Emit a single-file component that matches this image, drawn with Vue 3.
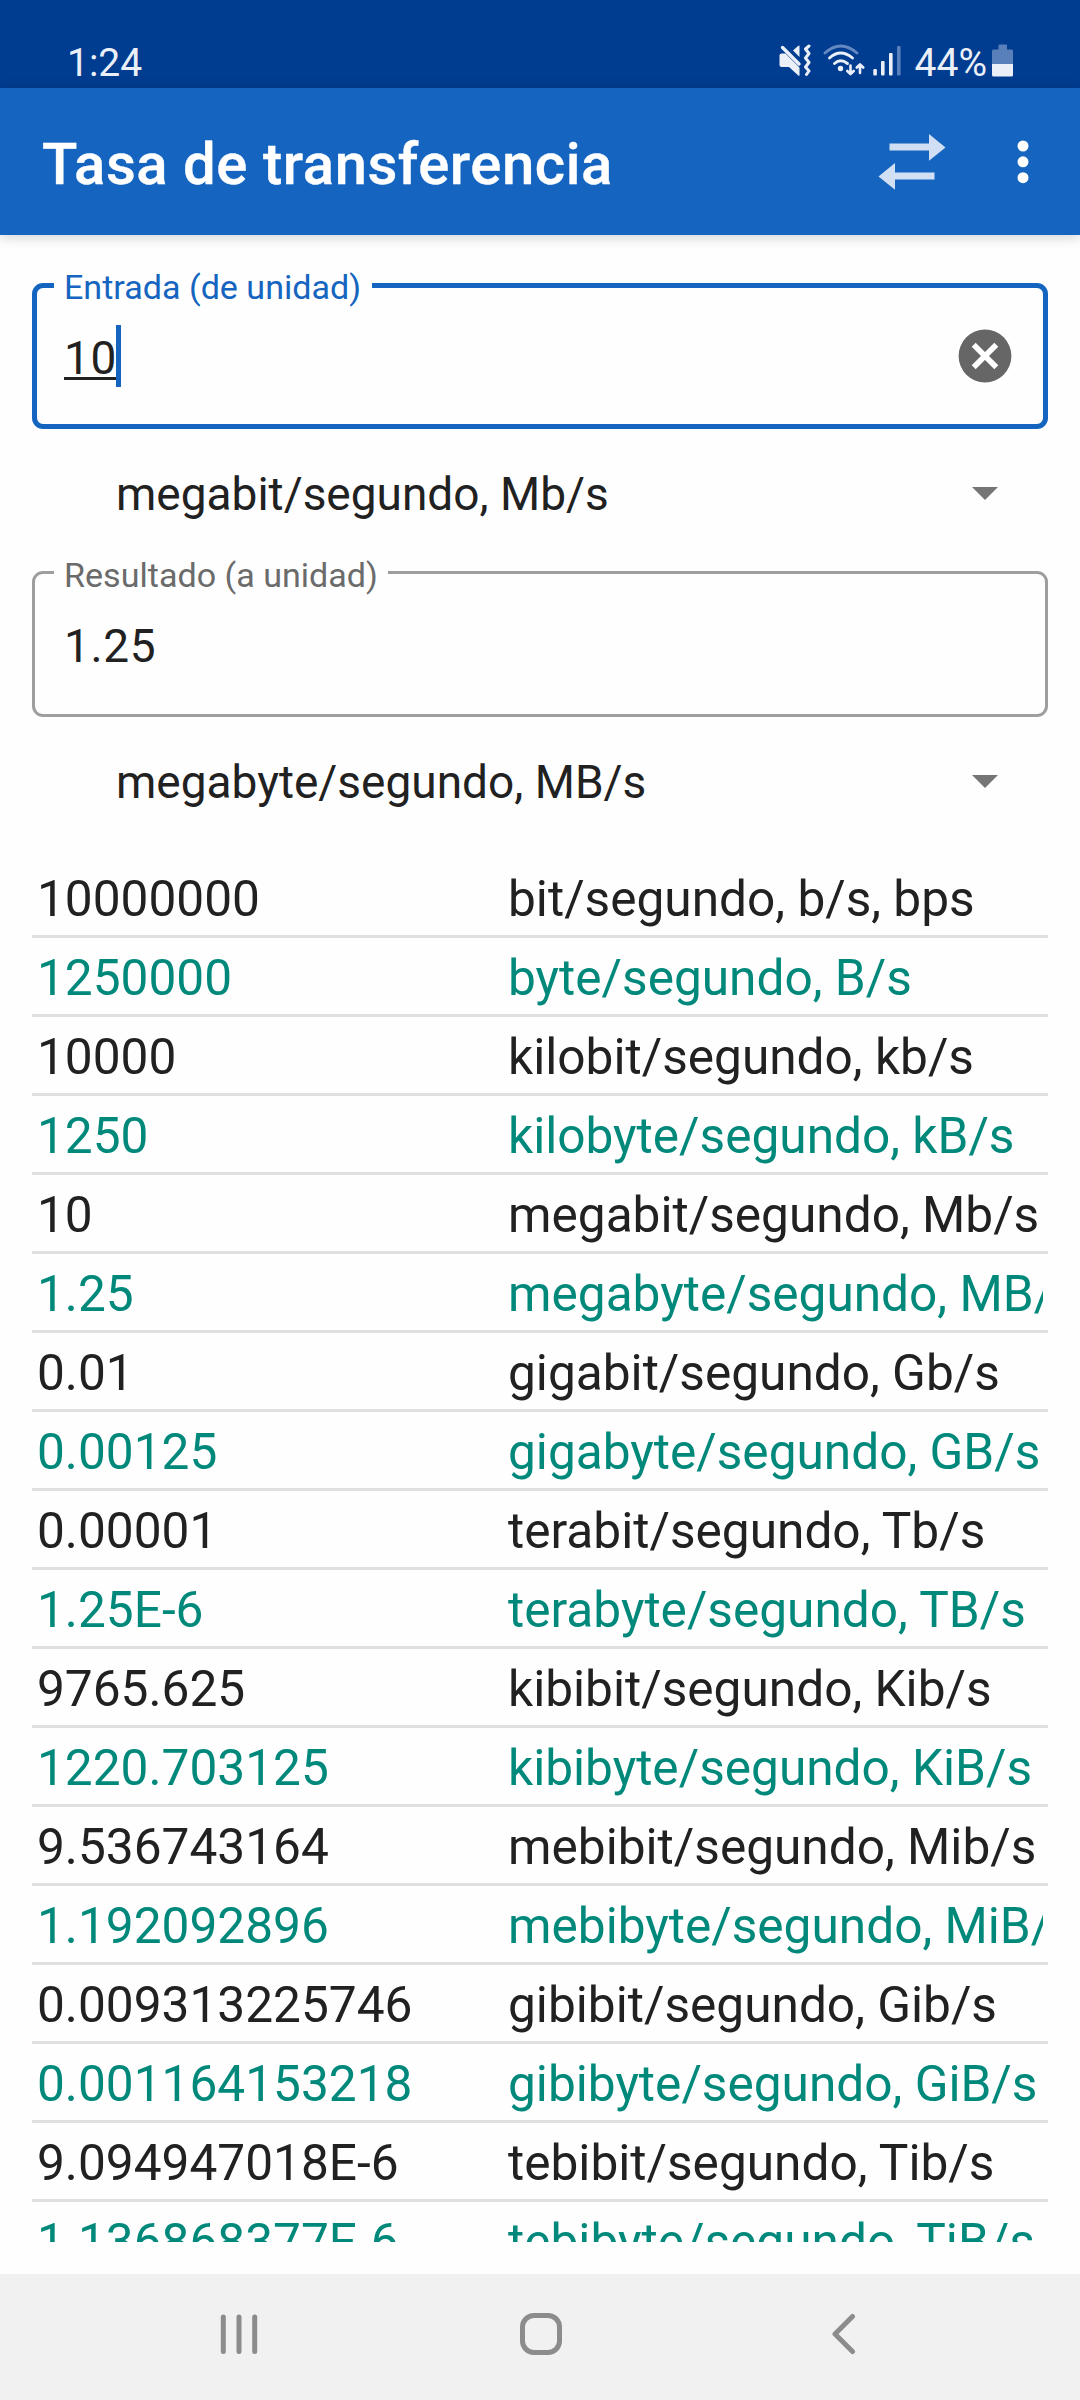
<template>
    <div class="screen">
        <div class="status-bar">
            <span class="time">1:24</span>
            <div class="status-icons">
                <svg class="ic-mute" width="34" height="34" viewBox="0 0 34 34">
                    <path d="M0.500 11.500 q0 -2 2 -2 h4 L20.500 23.500 v7.500 q0 1.500 -1.200 .5 l-9.300 -8.500 h-7.500 q-2 0 -2 -2 z" />
                    <path d="M20.500 1.500 v11.500 l-6.500 -6.500 l5 -4.600 z" />
                    <path class="line" d="M3.500 3.500 L20 20" stroke-width="3.400" />
                    <path class="line" d="M30 2 l-3.500 3 l3.500 4.500 l-3.500 4.500 l3.500 4.500 l-3.500 4.500 l3.500 4 l-2.500 3.500" stroke-width="3" />
                </svg>
                <svg class="ic-wifi" width="42" height="34" viewBox="0 0 42 34">
                    <path class="line dim" d="M2 9 Q17.500 -5 34 9" stroke-width="2.800" />
                    <path class="line" d="M6.500 14 Q17.500 4 29.500 14" stroke-width="2.900" />
                    <path class="line" d="M11.500 19.500 Q17.500 14 24.500 19.500" stroke-width="2.900" />
                    <circle cx="17.500" cy="24.500" r="2.700" />
                    <path class="line" d="M27.500 21.500 v8 M24.300 27 l3.200 3.200 l3.200 -3.200 M37 29 v-8 M33.800 23.500 l3.200 -3.200 l3.200 3.200" stroke-width="2.600" />
                </svg>
                <svg class="ic-signal" width="28" height="32" viewBox="0 0 28 32">
                    <rect x="0.300" y="24" width="3.600" height="6.500" rx="1" />
                    <rect x="8" y="16" width="3.600" height="14.500" rx="1" />
                    <rect x="16" y="8" width="3.600" height="22.500" rx="1" />
                    <rect class="faded" x="24" y="1" width="3.600" height="29.500" rx="1" />
                </svg>
                <span class="battery-text">44%</span>
                <svg class="ic-battery" width="22" height="34" viewBox="0 0 22 34">
                    <path class="faded" d="M6.500 1.500 q0 -1 1 -1 h6.500 q1 0 1 1 v4 h4.500 q1.500 0 1.500 1.500 v13.500 h-21 v-13.500 q0 -1.500 1.500 -1.500 h5 z" />
                    <path d="M0 20 h21 v11 q0 1.500 -1.500 1.500 h-18 q-1.500 0 -1.500 -1.500 z" />
                </svg>
            </div>
        </div>

        <header class="app-bar">
            <h1>Tasa de transferencia</h1>
            <svg class="ic-swap" width="68" height="56" viewBox="0 0 68 56">
                <path d="M11.500 9.500 h39.500 v-9.500 l16.500 13.500 l-16.500 13.200 v-10.200 h-39.500 z" />
                <path d="M56.500 38.500 h-39.500 v-9.500 l-16.500 13.500 l16.500 13.200 v-10.200 h39.500 z" />
            </svg>
            <svg class="ic-more" width="12" height="44" viewBox="0 0 12 44">
                <circle cx="6" cy="6" r="5.500" />
                <circle cx="6" cy="21.800" r="5.500" />
                <circle cx="6" cy="37.700" r="5.500" />
            </svg>
        </header>

        <main class="content">
            <div class="field focused">
                <label>Entrada (de unidad)</label>
                <span class="value composing">{{ input }}</span>
                <span class="cursor"></span>
                <svg class="ic-clear" width="54" height="54" viewBox="0 0 54 54">
                    <circle cx="27" cy="27" r="26.400" />
                    <path d="M15.700 15.700 L38.300 38.300 M38.300 15.700 L15.700 38.300" />
                </svg>
            </div>
            <div class="spinner">
                <span>{{ fromUnit }}</span>
                <svg class="ic-arrow" width="26" height="13" viewBox="0 0 26 13"><path d="M0 0 h26 l-13 13 z" /></svg>
            </div>
            <div class="field">
                <label>Resultado (a unidad)</label>
                <span class="value">{{ result }}</span>
            </div>
            <div class="spinner">
                <span>{{ toUnit }}</span>
                <svg class="ic-arrow" width="26" height="13" viewBox="0 0 26 13"><path d="M0 0 h26 l-13 13 z" /></svg>
            </div>

            <div class="results">
                <div v-for="(r, i) in rows" :key="i" class="row" :class="{ alt: i % 2 === 1 }">
                    <div class="amount">{{ r[0] }}</div>
                    <div class="unit">{{ r[1] }}</div>
                </div>
            </div>
        </main>

        <nav class="nav-bar">
            <svg width="40" height="44" viewBox="0 0 40 44">
                <path d="M4.300 5 v34.500 M20 5 v34.500 M35.700 5 v34.500" />
            </svg>
            <svg class="home" width="44" height="44" viewBox="0 0 44 44">
                <rect x="3.500" y="3.500" width="37" height="37" rx="11.500" />
            </svg>
            <svg class="back" width="28" height="44" viewBox="0 0 28 44">
                <path d="M24.500 4.500 L7 22 L24.500 39.500" />
            </svg>
        </nav>
    </div>
</template>

<script setup>
import { ref } from "vue";

const input = ref("10");
const result = ref("1.25");
const fromUnit = ref("megabit/segundo, Mb/s");
const toUnit = ref("megabyte/segundo, MB/s");

const rows = [
    ["10000000", "bit/segundo, b/s, bps"],
    ["1250000", "byte/segundo, B/s"],
    ["10000", "kilobit/segundo, kb/s"],
    ["1250", "kilobyte/segundo, kB/s"],
    ["10", "megabit/segundo, Mb/s"],
    ["1.25", "megabyte/segundo, MB/s"],
    ["0.01", "gigabit/segundo, Gb/s"],
    ["0.00125", "gigabyte/segundo, GB/s"],
    ["0.00001", "terabit/segundo, Tb/s"],
    ["1.25E-6", "terabyte/segundo, TB/s"],
    ["9765.625", "kibibit/segundo, Kib/s"],
    ["1220.703125", "kibibyte/segundo, KiB/s"],
    ["9.536743164", "mebibit/segundo, Mib/s"],
    ["1.192092896", "mebibyte/segundo, MiB/s"],
    ["0.009313225746", "gibibit/segundo, Gib/s"],
    ["0.001164153218", "gibibyte/segundo, GiB/s"],
    ["9.094947018E-6", "tebibit/segundo, Tib/s"],
    ["1.136868377E-6", "tebibyte/segundo, TiB/s"],
];
</script>

<style>
body {
    margin: 0;
    background: #fefefe;
}
</style>

<style scoped>
.screen {
    width: 1080px;
    height: 2400px;
    display: flex;
    flex-direction: column;
    overflow: hidden;
    background: #fefefe;
    color: #212121;
    font-family: Roboto, "Liberation Sans", sans-serif;
    white-space: nowrap;
}
svg {
    display: block;
    flex: none;
}
.status-bar {
    box-sizing: border-box;
    height: 88px;
    padding: 38px 66px 0 67px;
    display: flex;
    justify-content: space-between;
    align-items: flex-start;
    background: #003c8f;
    color: #ebeff8;
    font-size: 39px;
    line-height: 50px;
}
.status-icons {
    display: flex;
    align-items: flex-start;
}
.status-icons svg {
    fill: #ebeff8;
    margin-top: 6px;
}
.status-icons .line {
    fill: none;
    stroke: #ebeff8;
    stroke-linecap: round;
    stroke-linejoin: round;
}
.status-icons .dim {
    stroke: #6489c2;
}
.status-icons .faded {
    fill: #5a80bb;
}
.ic-wifi {
    margin-left: 10px;
}
.status-icons .ic-signal {
    margin-left: 8px;
    margin-top: 7px;
}
.battery-text {
    margin-left: 14px;
}
.ic-battery {
    margin-left: 5px;
}
.app-bar {
    position: relative;
    box-sizing: border-box;
    height: 147px;
    padding: 0 51px 0 42px;
    display: flex;
    align-items: center;
    background: #1565c0;
    color: #fff;
    box-shadow: 0 2px 12px rgba(0, 0, 0, 0.18);
}
.app-bar h1 {
    margin: 4px auto 0 0;
    font-size: 58px;
    line-height: 70px;
    font-weight: 500;
    letter-spacing: 0.55px;
    -webkit-text-stroke: 0.4px #fff;
}
.ic-swap {
    fill: #d0dff3;
    margin-right: 71px;
}
.ic-more {
    fill: #fff;
}
.content {
    flex: 1;
    min-height: 0;
    padding: 48px 32px 32px;
    display: flex;
    flex-direction: column;
}
.field {
    position: relative;
    flex: none;
    box-sizing: border-box;
    height: 146px;
    padding: 0 29px;
    display: flex;
    align-items: flex-start;
    border: 3px solid #9e9e9e;
    border-radius: 11px;
}
.field label {
    position: absolute;
    left: 19px;
    top: -20px;
    padding: 0 10px;
    background: #fefefe;
    color: #6b6b6b;
    font-size: 34.1px;
    line-height: 42px;
}
.field .value {
    margin-top: 42px;
    font-size: 46px;
    line-height: 60px;
    letter-spacing: 0.6px;
}
.field.focused {
    border: 5px solid #1565c0;
    padding: 0 27px;
}
.field.focused label {
    left: 17px;
    top: -22px;
    padding-right: 11px;
    color: #1565c0;
}
.field.focused .value {
    margin-top: 40px;
}
.composing {
    text-decoration: underline;
    text-decoration-thickness: 3px;
    text-underline-offset: 3px;
    text-decoration-skip-ink: none;
}
.cursor {
    width: 5px;
    height: 62px;
    margin: 37px auto 0 -1px;
    background: #1565c0;
}
.ic-clear {
    margin: 41px 4px 0 0;
    fill: #666;
}
.ic-clear path {
    stroke: #fff;
    stroke-width: 5.6;
}
.spinner {
    flex: none;
    height: 142px;
    box-sizing: border-box;
    padding: 0 50px 13px 84px;
    display: flex;
    align-items: center;
    justify-content: space-between;
    font-size: 46px;
    line-height: 60px;
}
.ic-arrow {
    fill: #757575;
}
.results {
    flex: 1;
    min-height: 0;
    overflow: hidden;
}
.row {
    height: 76px;
    padding: 0 5px;
    display: grid;
    grid-template-columns: 471px minmax(0, 1fr);
    border-bottom: 3px solid #e0e0e0;
    font-size: 49.6px;
    line-height: 80px;
}
.row.alt {
    color: #00897b;
}
.unit {
    height: 76px;
    overflow: hidden;
}
.nav-bar {
    box-sizing: border-box;
    height: 126px;
    padding: 0 0 6px 219px;
    display: flex;
    align-items: center;
    background: #f1f1f1;
}
.nav-bar svg {
    fill: none;
    stroke: #8c8c8c;
    stroke-width: 5;
    stroke-linecap: round;
    stroke-linejoin: round;
}
.nav-bar .home {
    margin-left: 260px;
}
.nav-bar .back {
    margin-left: 265px;
}
</style>
